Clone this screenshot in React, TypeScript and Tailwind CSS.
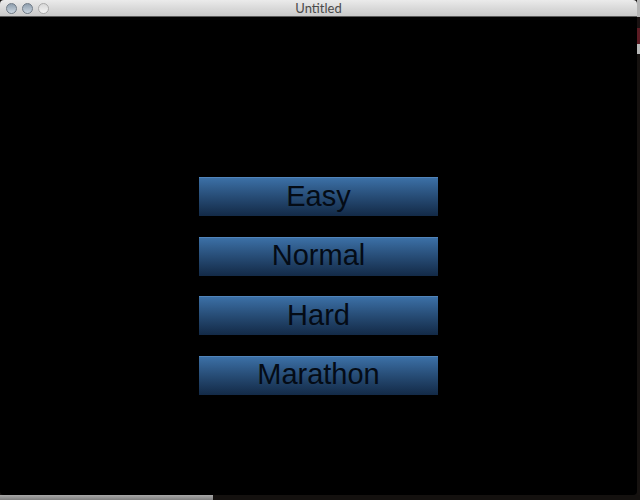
const levels = ["Easy", "Normal", "Hard", "Marathon"]

export default function App() {
  return (
    <div className="flex h-[500px] w-[640px] flex-col overflow-hidden bg-[#14110f]">
      <div className="flex h-[495px]">
        <div className="flex h-[495px] w-[637px] flex-col overflow-hidden rounded-[4px] bg-black">
          <TitleBar />
          <main className="flex flex-1 flex-col items-center gap-[20.67px] pt-[160px]">
            {levels.map((level) => (
              <button
                key={level}
                className="flex h-[39px] w-[239px] items-center justify-center bg-gradient-to-b from-[#3d72a9] to-[#132a47] pb-[1px] text-[29px] leading-none text-[#040b15] shadow-[inset_0_1px_0_rgba(120,170,220,0.35)]"
                style={{ fontFamily: '"Liberation Sans", Arial, sans-serif' }}
              >
                {level}
              </button>
            ))}
          </main>
        </div>
        {/* desktop peeking through on the right */}
        <div className="flex w-[3px] flex-col">
          <div className="h-[17px] bg-[#b5b5b5]" />
          <div className="h-[11px] bg-[#1a1212]" />
          <div className="h-[16px] bg-[#5c1c24]" />
          <div className="h-[10px] bg-[#b8b8b8]" />
          <div className="flex-1 bg-[#161210]" />
        </div>
      </div>
      <div className="flex h-[5px]">
        <div className="w-[213px] bg-gradient-to-b from-[#a8a8a8] to-[#808080]" />
        <div className="flex-1 bg-[#14110f]" />
      </div>
    </div>
  )
}

function TitleBar() {
  return (
    <div className="relative flex h-[17px] shrink-0 items-center border-b border-[#5a5a5a] bg-gradient-to-b from-[#ebebeb] to-[#c9c9c9] px-[6px]">
      <div className="flex gap-[5px]">
        <Light />
        <Light />
        <Light faded />
      </div>
      <span
        className="absolute inset-x-0 top-[1px] text-center text-[13px] leading-[15px] text-[#4a4a4a]"
        style={{ fontFamily: '"Lato", "Liberation Sans", sans-serif' }}
      >
        Untitled
      </span>
    </div>
  )
}

function Light({ faded = false }: { faded?: boolean }) {
  return (
    <span
      className={
        faded
          ? "h-[11px] w-[11px] rounded-full border border-[#a9a9a9] bg-gradient-to-b from-[#d8d8d8] to-[#f4f4f4]"
          : "h-[11px] w-[11px] rounded-full border border-[#6f7a86] bg-gradient-to-b from-[#8e9eae] to-[#cbd6e0]"
      }
    />
  )
}
